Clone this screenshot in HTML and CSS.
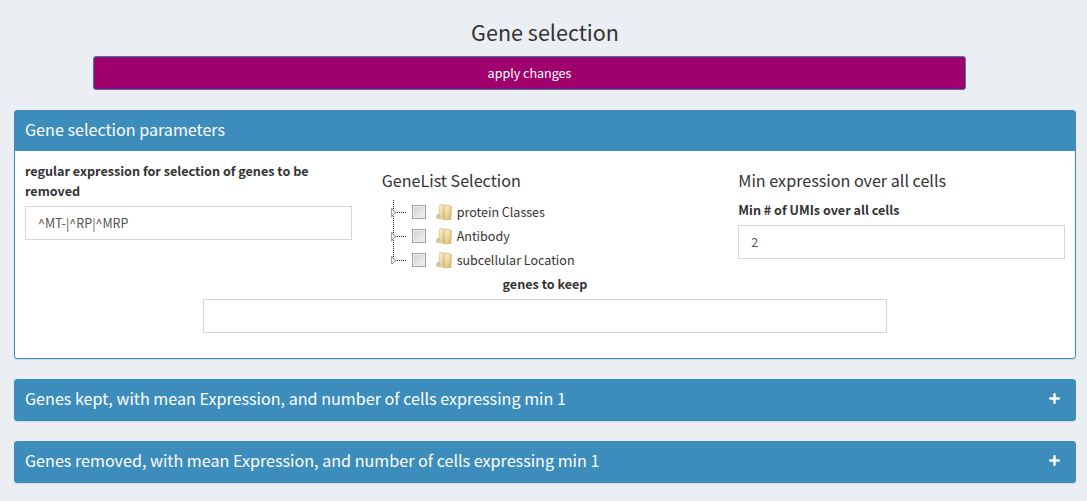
FILE: index.html
```html
<!DOCTYPE html>
<html lang="en">
<head>
<meta charset="utf-8">
<title>Gene selection</title>
<link rel="stylesheet" href="styles.css">
</head>
<body>
<svg class="defs" width="0" height="0" aria-hidden="true">
  <defs>
    <linearGradient id="gold" x1="0" y1="0" x2="1" y2="1"><stop offset="0" stop-color="#fffae0"/><stop offset="1" stop-color="#dcb968"/></linearGradient>
    <linearGradient id="grey" x1="0" y1="0" x2="1" y2="1"><stop offset="0" stop-color="#d2d2d2"/><stop offset="1" stop-color="#f1f1f1"/></linearGradient>
    <symbol id="branch" viewBox="0 0 20 24">
      <path d="M5.5 0V24" stroke="#222" stroke-dasharray="1 1"/>
      <path d="M9 12.5H19" stroke="#222" stroke-dasharray="1 1"/>
      <path d="M3.5 8.5L7.8 12.5L3.5 16.5Z" fill="#f4f4f4" stroke="#a3a3a3" stroke-width="1.1"/>
    </symbol>
    <symbol id="check" viewBox="0 0 14 14"><rect x=".5" y=".5" width="13" height="13" fill="#eee" stroke="#a2a2a2"/><rect x="2" y="2" width="10" height="10" fill="url(#grey)"/></symbol>
    <symbol id="folder" viewBox="0 0 16 16">
      <path d="M.5 11L3 9.5V14.8H1Q0 14.3 0 13Z" fill="#c4c1ba"/>
      <path d="M3.3 1.2L4 .5H7L8 1.2H9V13.5L7.5 14.8H2.5L3.3 13Z" fill="url(#gold)" stroke="#cdb272" stroke-width=".6"/>
      <path d="M8.3 2.2L9 1.4H12.5L13.5 2.2H15L15.4 3L14.8 15.4H7L8.3 13.6Z" fill="url(#gold)" stroke="#c39c4c" stroke-width=".6"/>
    </symbol>
  </defs>
</svg>
<main class="page">
  <h3 class="title">Gene selection</h3>
  <button class="apply">apply changes</button>
  <section class="box">
    <header class="box-header">Gene selection parameters</header>
    <div class="box-body">
      <div class="columns">
        <div class="column">
          <label class="label" for="regex">regular expression for selection of genes to be removed</label>
          <input class="field" id="regex" value="^MT-|^RP|^MRP">
        </div>
        <div class="column">
          <h4 class="subtitle">GeneList Selection</h4>
          <ul class="tree">
            <li class="node"><svg class="branch"><use href="#branch"/></svg><svg class="check"><use href="#check"/></svg><svg class="folder"><use href="#folder"/></svg><span>protein Classes</span></li>
            <li class="node"><svg class="branch"><use href="#branch"/></svg><svg class="check"><use href="#check"/></svg><svg class="folder"><use href="#folder"/></svg><span>Antibody</span></li>
            <li class="node"><svg class="branch last"><use href="#branch"/></svg><svg class="check"><use href="#check"/></svg><svg class="folder"><use href="#folder"/></svg><span>subcellular Location</span></li>
          </ul>
        </div>
        <div class="column">
          <h4 class="subtitle">Min expression over all cells</h4>
          <label class="label" for="umi">Min # of UMIs over all cells</label>
          <input class="field" id="umi" value="2">
        </div>
      </div>
      <div class="keep">
        <label class="label" for="keep">genes to keep</label>
        <input class="field" id="keep">
      </div>
    </div>
  </section>
  <section class="box collapsed">
    <header class="box-header"><span>Genes kept, with mean Expression, and number of cells expressing min 1</span><svg class="plus" viewBox="0 0 11 11"><path d="M5.5 1.2V9.8M1.2 5.5H9.8"/></svg></header>
  </section>
  <section class="box collapsed">
    <header class="box-header"><span>Genes removed, with mean Expression, and number of cells expressing min 1</span><svg class="plus" viewBox="0 0 11 11"><path d="M5.5 1.2V9.8M1.2 5.5H9.8"/></svg></header>
  </section>
</main>
</body>
</html>
```
FILE: styles.css
```css
* { box-sizing: border-box; }
body {
  margin: 0;
  height: 501px;
  overflow: hidden;
  background: #ebeef3;
  color: #333;
  font: 12.53px/20px "Noto Sans CJK SC", sans-serif;
}
.defs { position: absolute; }
.page { padding: 19px 11px 0 14px; }
.title {
  margin: 0;
  width: 1062px;
  height: 37px;
  text-align: center;
  font-size: 21.55px;
  line-height: 26px;
  font-weight: 400;
}
.apply {
  display: block;
  width: 873px;
  height: 34px;
  margin: 0 0 20px 79px;
  padding: 0;
  border: 1px solid #367fa9;
  border-radius: 3px;
  background: #a0006e;
  color: #fff;
  font: inherit;
}
.box {
  width: 1062px;
  height: 249px;
  margin-bottom: 20px;
  border: 1px solid #3c8dbc;
  border-radius: 3px;
  background: #fff;
  box-shadow: 0 1px 1px rgba(0, 0, 0, .1);
}
.box.collapsed { height: 42px; background: #3c8dbc; }
.box-header {
  display: flex;
  align-items: center;
  justify-content: space-between;
  height: 40px;
  padding: 0 15px 4px 10px;
  background: #3c8dbc;
  color: #fff;
  font-size: 16.14px;
}
.plus { width: 11px; height: 11px; fill: none; stroke: #fff; stroke-width: 2.4; stroke-linecap: round; }
.box-body { padding: 10px; }
.columns {
  display: grid;
  grid-template-columns: repeat(3, 1fr);
  gap: 30px;
  height: 113px;
}
.label { display: block; margin-bottom: 5px; font-size: 12.6px; font-weight: 700; }
.field {
  display: block;
  width: 100%;
  height: 34px;
  padding: 5px 12px 7px;
  border: 1px solid #d2d6de;
  border-radius: 0;
  background: #fff;
  color: #555;
  font: inherit;
}
.subtitle { margin: 9px 0 10px; font-size: 16.14px; line-height: 20px; font-weight: 400; }
.tree { list-style: none; margin: 0; padding: 0 0 0 6px; }
.node { display: flex; align-items: center; height: 24px; }
.branch { width: 20px; height: 24px; margin-right: 4px; }
.last { clip-path: inset(0 0 8px 0); }
.check { width: 14px; height: 14px; margin-right: 10px; }
.folder { width: 16px; height: 16px; margin-right: 5px; }
.keep { width: 684px; margin: 0 auto; text-align: center; }
```
